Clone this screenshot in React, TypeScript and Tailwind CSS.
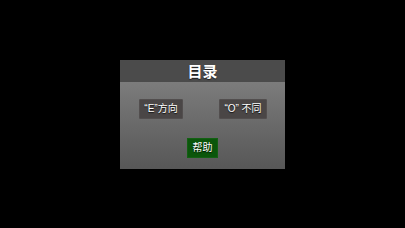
export default function App() {
  const font = { fontFamily: '"Liberation Sans", "Noto Sans CJK SC", sans-serif' };
  return (
    <div className="w-screen h-screen bg-black flex items-center justify-center" style={font}>
      <div className="w-[165px] h-[109px] flex flex-col">
        <div className="h-[22px] bg-[#4b4b4b] flex items-center justify-center pt-px text-white font-bold text-[15px] leading-none [text-shadow:0_1px_1px_rgba(0,0,0,0.6)]">
          目录
        </div>
        <div className="flex-1 bg-gradient-to-b from-[#7c7c7c] to-[#575757] flex flex-col items-center pt-[17px]">
          <div className="w-full flex justify-between pl-[19px] pr-[18px]">
            <button className="w-[44px] h-[20px] bg-[#4a4646] border border-[#524e4e] rounded-[1px] text-white text-[10px] leading-none flex items-center justify-center [text-shadow:0_1px_1px_rgba(0,0,0,0.8)]">
              “E”方向
            </button>
            <button className="w-[48px] h-[20px] bg-[#4a4646] border border-[#524e4e] rounded-[1px] text-white text-[10px] leading-none flex items-center justify-center [text-shadow:0_1px_1px_rgba(0,0,0,0.8)]">
              “O” 不同
            </button>
          </div>
          <button className="mt-[19px] w-[31px] h-[20px] bg-[#0b560b] border border-[#136013] text-white text-[10px] leading-none flex items-center justify-center [text-shadow:0_1px_1px_rgba(0,0,0,0.8)]">
            帮助
          </button>
        </div>
      </div>
    </div>
  );
}
